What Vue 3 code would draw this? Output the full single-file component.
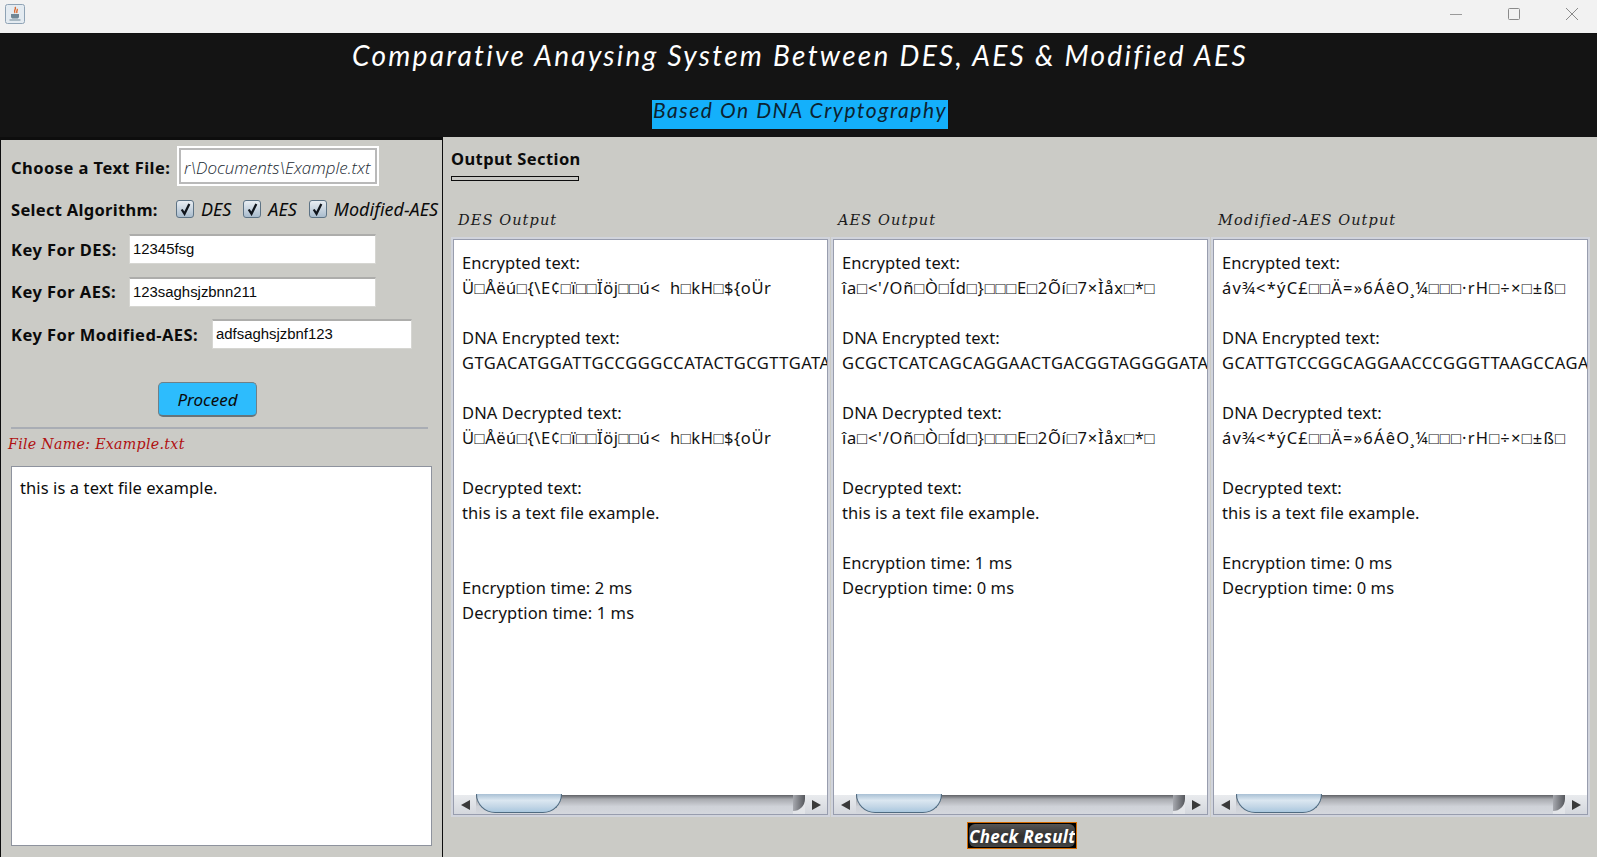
<script setup>
const enc1 = 'Ü□Åëú□{\\E¢□ï□□Ïöj□□ú<  h□kH□${oÜr'
const enc2 = "îa□<'/Oñ□Ò□Íd□}□□□E□2Õí□7×Ìåx□*□"
const enc3 = 'áv¾<*ýC£□□Ä=»6ÁêO¸¼□□□·rH□÷×□±ß□'
const sample = 'this is a text file example.'
const build = (enc, dna, gaps, t1, t2) => [
  { text: 'Encrypted text:' }, { text: enc, cls: 'enc' }, { text: '' },
  { text: 'DNA Encrypted text:' }, { text: dna, cls: 'dna' }, { text: '' },
  { text: 'DNA Decrypted text:' }, { text: enc, cls: 'enc' }, { text: '' },
  { text: 'Decrypted text:' }, { text: sample },
  ...Array(gaps).fill({ text: '' }),
  { text: `Encryption time: ${t1} ms` }, { text: `Decryption time: ${t2} ms` }
]
const columns = [
  { title: 'DES Output', cls: 'col-des', lines: build(enc1, 'GTGACATGGATTGCCGGGCCATACTGCGTTGATA', 2, 2, 1) },
  { title: 'AES Output', cls: 'col-aes', lines: build(enc2, 'GCGCTCATCAGCAGGAACTGACGGTAGGGGATA', 1, 1, 0) },
  { title: 'Modified-AES Output', cls: 'col-mod', lines: build(enc3, 'GCATTGTCCGGCAGGAACCCGGGTTAAGCCAGA', 1, 0, 0) }
]
const keys = [
  { label: 'Key For DES:', value: '12345fsg', cls: 'key-short', labelCls: 'label-short' },
  { label: 'Key For AES:', value: '123saghsjzbnn211', cls: 'key-short', labelCls: 'label-short' },
  { label: 'Key For Modified-AES:', value: 'adfsaghsjzbnf123', cls: 'key-long', labelCls: 'label-long' }
]
const algos = ['DES', 'AES', 'Modified-AES']
</script>

<template>
  <div class="window">
    <div class="titlebar">
      <svg class="java" viewBox="0 0 20 20" width="20" height="20">
        <rect x="0.5" y="0.5" width="19" height="19" rx="2" fill="#e4ebf1" stroke="#8fa3b5" />
        <path d="M10 3c2 2-2 3 0 6M12 5c1 1-1 2 0 4" fill="none" stroke="#d9662a" stroke-width="1.4" />
        <path d="M6 10h8v2.5c0 1.5-1 2-2 2H8c-1 0-2-.5-2-2z" fill="#6f8796" />
        <path d="M4.5 16h11" stroke="#6f8796" stroke-width="1" />
      </svg>
      <div class="controls">
        <svg width="14" height="14" viewBox="0 0 14 14"><path d="M1 7.5h12" stroke="#9a9a9a" /></svg>
        <svg width="14" height="14" viewBox="0 0 14 14"><rect x="1.5" y="1.5" width="11" height="11" rx="1" fill="none" stroke="#8a8a8a" /></svg>
        <svg width="14" height="14" viewBox="0 0 14 14"><path d="M1 1l12 12M13 1L1 13" stroke="#8a8a8a" /></svg>
      </div>
    </div>

    <header class="banner">
      <h1>Comparative Anaysing System Between DES, AES &amp; Modified AES</h1>
      <h2>Based On DNA Cryptography</h2>
    </header>

    <main class="body">
      <aside class="left">
        <div class="row file-row">
          <span class="label label-file">Choose a Text File:</span>
          <div class="file-field">r\Documents\Example.txt</div>
        </div>
        <div class="row algo-row">
          <span class="label">Select Algorithm:</span>
          <label v-for="a in algos" :key="a" class="check">
            <span class="box">
              <svg width="13" height="13" viewBox="0 0 12 12"><path d="M2.5 6l2.6 4L9.5 1" fill="none" stroke="#10151c" stroke-width="2.1" /></svg>
            </span>
            <span class="check-text">{{ a }}</span>
          </label>
        </div>
        <div v-for="k in keys" :key="k.label" class="row key-row">
          <span class="label" :class="k.labelCls">{{ k.label }}</span>
          <div class="key-field" :class="k.cls">{{ k.value }}</div>
        </div>
        <div class="proceed-wrap"><button class="proceed">Proceed</button></div>
        <div class="sep"></div>
        <div class="file-name">File Name: Example.txt</div>
        <div class="source">{{ sample }}</div>
      </aside>

      <section class="right">
        <div class="tab">
          <span class="tab-text">Output Section</span>
          <span class="tab-line"></span>
        </div>
        <div class="cols">
          <div v-for="c in columns" :key="c.title" class="col" :class="c.cls">
            <div class="col-title">{{ c.title }}</div>
            <div class="pane">
              <div class="pane-inner">
                <div class="pane-text">
                  <div v-for="(l, i) in c.lines" :key="i" class="line" :class="l.cls">{{ l.text }}</div>
                </div>
                <div class="hbar">
                  <span class="arrow left-arrow"></span>
                  <span class="track">
                    <span class="thumb"></span>
                    <span class="cap"></span>
                  </span>
                  <span class="arrow right-arrow"></span>
                </div>
              </div>
            </div>
          </div>
        </div>
        <div class="check-wrap"><button class="check-result"><span class="check-face">Check Result</span></button></div>
      </section>
    </main>
  </div>
</template>

<style>
html, body { margin: 0; background: #cbcbc6; overflow: hidden; }
</style>

<style scoped>
.window {
  width: 1597px;
  height: 857px;
  display: flex;
  flex-direction: column;
  font-family: "Noto Sans", "Open Sans", sans-serif;
  color: #0b0b0b;
  overflow: hidden;
}
.titlebar {
  height: 34px;
  flex: none;
  box-sizing: border-box;
  background: #f2f2f2;
  border-bottom: 1px solid #111;
  display: flex;
  align-items: flex-start;
  justify-content: space-between;
  padding: 4px 18px 0 5px;
}
.controls {
  display: flex;
  gap: 44px;
  padding-top: 3px;
}
.banner {
  height: 103px;
  flex: none;
  box-sizing: border-box;
  background: #141414;
  display: flex;
  flex-direction: column;
  align-items: center;
  padding-left: 3px;
}
.banner h1 {
  margin: 0;
  padding-top: 1px;
  font: italic 400 28px/40px "Lato", sans-serif;
  letter-spacing: 2.3px;
  color: #fff;
  white-space: nowrap;
}
.banner h2 {
  margin: 25px 0 0;
  width: 296px;
  height: 29px;
  background: #14b0fb;
  color: #0c2330;
  font: italic 400 21px/20px "Lato", sans-serif;
  letter-spacing: 1.55px;
  text-align: center;
  white-space: nowrap;
}
.body {
  flex: 1;
  display: flex;
  min-height: 0;
  background: #cbcbc6;
}
.left {
  width: 443px;
  flex: none;
  box-sizing: border-box;
  border: 1px solid #0d0d0d;
  border-top: 3px solid #0d0d0d;
  border-bottom: none;
  padding: 6px 9px 0 10px;
  display: flex;
  flex-direction: column;
}
.row {
  display: flex;
  align-items: center;
}
.label {
  font-weight: 700;
  font-size: 16.5px;
  letter-spacing: 0.45px;
  white-space: nowrap;
}
.label-file { width: 166px; flex: none; padding-top: 2px; }
.label-short { width: 118px; flex: none; }
.label-long { width: 201px; flex: none; }
.file-row {
  height: 40px;
}
.file-field {
  width: 202px;
  height: 40px;
  box-sizing: border-box;
  background: #fff;
  border: 2px solid #fff;
  box-shadow: inset 0 0 0 2px #b9b9b9;
  padding-left: 5px;
  font: italic 300 17px/39px "Open Sans", sans-serif;
  color: #222a33;
  white-space: nowrap;
  overflow: hidden;
}
.algo-row {
  margin-top: 6px;
  height: 34px;
}
.algo-row .label { width: 165px; flex: none; letter-spacing: 0.3px; }
.check {
  display: flex;
  align-items: center;
  gap: 7px;
  margin-right: 12px;
}
.check:last-child { margin-right: 0; }
.box {
  width: 18px;
  height: 18px;
  box-sizing: border-box;
  border: 1px solid #5d7385;
  border-radius: 3px;
  background: linear-gradient(#e9eef3, #a9bccd);
  display: flex;
  align-items: center;
  justify-content: center;
}
.check-text {
  font-style: italic;
  font-size: 18px;
  white-space: nowrap;
}
.key-row {
  height: 30px;
  margin-top: 12.5px;
}
.algo-row + .key-row { margin-top: 8px; }
.key-field {
  height: 30px;
  box-sizing: border-box;
  background: #fff;
  border: 1px solid #d6d6d2;
  border-top: 2px solid #adadab;
  padding-left: 3px;
  font: 400 14.9px/27px "Liberation Sans", sans-serif;
  color: #0a0a0a;
  white-space: nowrap;
}
.key-short { width: 247px; }
.key-long { width: 200px; }
.proceed-wrap {
  display: flex;
  justify-content: center;
  margin-top: 33px;
  padding-right: 29px;
}
.proceed {
  width: 99px;
  height: 35px;
  box-sizing: border-box;
  padding: 0;
  background: #2dbcfd;
  border: 1px solid #6f8088;
  border-bottom: 2px solid #66747a;
  border-radius: 5px;
  font: italic 400 17px/31px "Noto Sans", sans-serif;
  color: #0b0b0b;
}
.sep {
  height: 2px;
  margin: 10px 5px 0 0;
  background: #a9adb4;
}
.file-name {
  margin: 4px 0 0 -3px;
  height: 24px;
  font: italic 400 14.2px/22px "DejaVu Serif", serif;
  letter-spacing: 0.3px;
  color: #b01010;
  white-space: nowrap;
}
.source {
  margin-top: 9px;
  height: 380px;
  box-sizing: border-box;
  width: 421px;
  background: #fff;
  border: 1px solid #8e939e;
  padding: 8px 8px;
  font-size: 16.5px;
  letter-spacing: 0.1px;
  line-height: 25px;
}
.right {
  flex: 1;
  min-width: 0;
  padding-left: 8px;
  display: flex;
  flex-direction: column;
}
.tab {
  width: 128px;
  display: flex;
  flex-direction: column;
  margin-top: 11px;
}
.tab-text {
  font-weight: 700;
  font-size: 16.5px;
  line-height: 22px;
  letter-spacing: 0.4px;
  white-space: nowrap;
}
.tab-line {
  margin-top: 6px;
  height: 5px;
  box-sizing: border-box;
  border: 1px solid #0d0d0d;
  background: #c8c8c4;
}
.cols {
  display: flex;
  gap: 1px;
  margin-top: 27px;
}
.col {
  width: 379px;
  flex: none;
}
.col-title {
  height: 29px;
  padding-left: 7px;
  font: italic 400 14.5px/24px "DejaVu Serif", serif;
  letter-spacing: 1.1px;
  color: #1a1a1a;
  white-space: nowrap;
}
.pane {
  height: 580px;
  box-sizing: border-box;
  border: 2px solid #d1d4dc;
}
.pane-inner {
  height: 100%;
  box-sizing: border-box;
  border: 1px solid #989dae;
  background: #fff;
  display: flex;
  flex-direction: column;
}
.pane-text {
  flex: 1;
  min-height: 0;
  padding: 10px 0 0 8px;
  font: 400 16.5px/25px "Noto Sans", "Liberation Sans", "DejaVu Sans", sans-serif;
  letter-spacing: 0.1px;
  color: #111;
  overflow: hidden;
}
.line {
  height: 25px;
  white-space: pre;
}
.dna { letter-spacing: 0.5px; }
.col-des .enc { letter-spacing: 0.56px; }
.col-aes .enc { letter-spacing: 0.8px; }
.col-mod .enc { letter-spacing: 1.2px; }
.hbar {
  height: 19px;
  flex: none;
  display: flex;
  align-items: stretch;
  background: linear-gradient(#e9ebee, #d4d7dd);
  position: relative;
}
.arrow {
  width: 22px;
  flex: none;
  position: relative;
}
.arrow::after {
  content: "";
  position: absolute;
  top: 5px;
  border-top: 5px solid transparent;
  border-bottom: 5px solid transparent;
}
.left-arrow::after { left: 7px; border-right: 9px solid #3a3a3a; }
.right-arrow::after { right: 6px; border-left: 9px solid #3a3a3a; }
.track {
  flex: 1;
  position: relative;
  background: linear-gradient(#5f6166 0, #a9abb0 22%, #cfd2d8 60%, #d4d7dd 100%);
}
.thumb {
  position: absolute;
  left: 0;
  top: -1px;
  width: 86px;
  height: 19px;
  box-sizing: border-box;
  border: 1px solid #4e6a80;
  border-top: none;
  border-radius: 0 0 20px 20px;
  background: linear-gradient(#a9c0d4, #dbe7f1 35%, #c3d6e6 70%, #a9c7de);
}
.cap {
  position: absolute;
  right: 0;
  top: 0;
  width: 12px;
  height: 19px;
  background: linear-gradient(#e9ebee, #e2e4e8);
}
.cap::before {
  content: "";
  position: absolute;
  inset: 0 0 3px 0;
  border-radius: 0 0 12px 0;
  background: linear-gradient(90deg, #a7a9af, #55575c);
}
.check-wrap {
  display: flex;
  justify-content: center;
  margin-top: 5px;
  padding-right: 4px;
}
.check-result {
  width: 110px;
  height: 27px;
  box-sizing: border-box;
  padding: 1px;
  background: #000;
  border: 1px solid #d36a00;
  display: flex;
}
.check-face {
  flex: 1;
  border-radius: 6px;
  background: linear-gradient(#555, #2e2e2e 55%, #454545);
  font: italic 700 17px/25px "Noto Sans", sans-serif;
  letter-spacing: 0.3px;
  color: #fff;
  white-space: nowrap;
  overflow: hidden;
}
</style>
